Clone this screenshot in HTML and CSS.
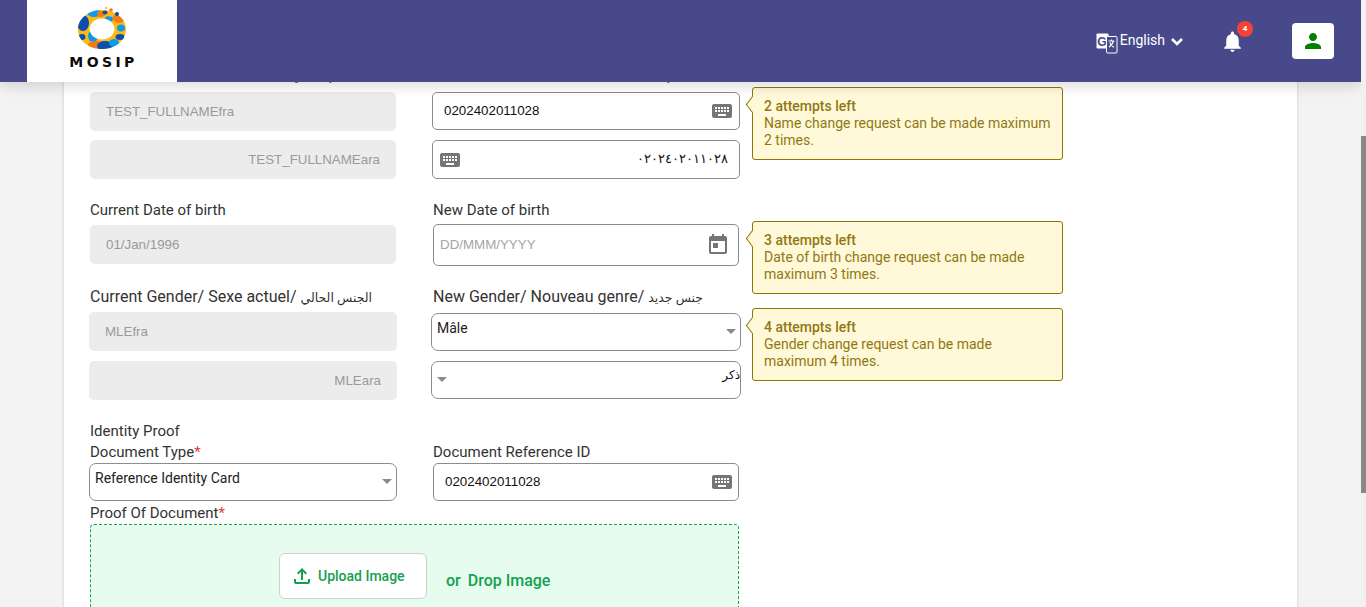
FILE: index.html
```html
<!DOCTYPE html>
<html lang="en">
<head>
<meta charset="utf-8">
<title>Update demographic data</title>
<link rel="stylesheet" href="styles.css">
</head>
<body>
<div class="page">
  <div class="view">
    <header class="header">
      <div class="logo">
        <svg class="logo-mark" viewBox="0 0 60 46" width="60" height="46" aria-hidden="true">
          <defs><clipPath id="ring"><path clip-rule="evenodd" d="M30 6c13.300 0 24 8.500 24 19.500S43.300 45 30 45 6 36.500 6 25.500 16.700 6 30 6zm0 8.500c-7 0-12.500 4.800-12.500 10.500S23 35.500 30 35.500 42.500 30.700 42.500 25 37 14.500 30 14.500z"/></clipPath></defs>
          <g clip-path="url(#ring)">
            <rect width="60" height="46" fill="#fdb913"/>
            <ellipse cx="11" cy="19" rx="6" ry="8" fill="#0a4fb0"/>
            <ellipse cx="22" cy="9" rx="7" ry="4" fill="#0a9bf0"/>
            <ellipse cx="29" cy="10" rx="4" ry="3" fill="#f57c14"/>
            <ellipse cx="47" cy="14" rx="6" ry="5" fill="#f57c14"/>
            <ellipse cx="49" cy="24" rx="4" ry="3.500" fill="#0a9bf0"/>
            <ellipse cx="48" cy="33" rx="4.500" ry="3" fill="#0a4fb0"/>
            <ellipse cx="21" cy="32" rx="5" ry="6" fill="#0a9bf0"/>
            <ellipse cx="24" cy="41" rx="8" ry="4" fill="#f57c14"/>
            <ellipse cx="33" cy="42" rx="8" ry="5" fill="#0a4fb0"/>
            <ellipse cx="42" cy="39" rx="5" ry="4" fill="#0a9bf0"/>
            <ellipse cx="10" cy="33" rx="3.500" ry="3" fill="#0a4fb0"/>
            <ellipse cx="37" cy="15" rx="4" ry="3" fill="#0a9bf0"/>
          </g>
          <ellipse cx="33" cy="8.500" rx="2.500" ry="2" fill="#0a4fb0"/>
          <circle cx="45" cy="10" r="2" fill="#0a4fb0"/>
          <circle cx="39" cy="6" r="1.800" fill="#f57c14"/>
          <circle cx="38" cy="11" r="1.800" fill="#fdb913"/>
          <circle cx="34" cy="4" r="1.100" fill="#fdb913"/>
        </svg>
        <span class="logo-text">MOSIP</span>
      </div>
      <div class="header-right">
        <div class="lang">
          <svg class="lang-icon" viewBox="0 0 22 21" width="22" height="21" aria-hidden="true">
            <rect x="0.500" y="0.500" width="12" height="15" rx="1" fill="#fff"/>
            <text x="6" y="12.500" class="lang-g">G</text>
            <rect x="10.500" y="3.500" width="10.500" height="16.500" rx="1" fill="#47498a" stroke="#fff"/>
            <path d="M12.500 8h6M15.500 6.500V8M17.500 8c-.8 3-2.700 5-4.500 6M13.800 9.500c.8 2 2.500 3.800 4.200 4.800" fill="none" stroke="#fff" stroke-width="1.200"/>
          </svg>
          <span>English</span>
          <svg class="chev" viewBox="0 0 14 9" width="14" height="9" aria-hidden="true"><path d="M2 2l5 5 5-5" fill="none" stroke="#fff" stroke-width="2.600"/></svg>
        </div>
        <div class="bell">
          <svg viewBox="0 0 24 24" width="25" height="25" aria-hidden="true"><path fill="#fff" d="M12 22c1.100 0 2-.9 2-2h-4c0 1.100.89 2 2 2zm6-6v-5c0-3.070-1.640-5.640-4.500-6.320V4c0-.83-.67-1.500-1.500-1.500s-1.500.67-1.500 1.500v.68C7.630 5.360 6 7.920 6 11v5l-2 2v1h16v-1l-2-2z"/></svg>
          <span class="badge">4</span>
        </div>
        <div class="user">
          <svg viewBox="0 0 24 24" width="24" height="24" aria-hidden="true"><path fill="#008000" d="M12 12c2.210 0 4-1.790 4-4s-1.790-4-4-4-4 1.790-4 4 1.790 4 4 4zm0 2c-2.670 0-8 1.340-8 4v2h16v-2c0-2.660-5.330-4-8-4z"/></svg>
        </div>
      </div>
    </header>

    <main class="card">
      <section class="row row-name">
        <div class="col">
          <div class="label label-top label-mixed">Current Name/ Nom actuel/ <span class="ar">الاسم الحالي</span></div>
          <div class="field readonly">TEST_FULLNAMEfra</div>
          <div class="field readonly rtl stack">TEST_FULLNAMEara</div>
        </div>
        <div class="col wide">
          <div class="label label-top label-mixed indent">New Name/ Nouveau nom/ <span class="ar">الاسم الجديد</span></div>
          <div class="field entry entry-short">
            <span class="value">0202402011028</span>
            <svg class="kb" viewBox="0 0 24 24" width="24" height="24" aria-hidden="true"><path d="M20 5H4c-1.100 0-1.990.9-1.990 2L2 17c0 1.100.9 2 2 2h16c1.100 0 2-.9 2-2V7c0-1.100-.9-2-2-2zm-9 3h2v2h-2V8zm0 3h2v2h-2v-2zM8 8h2v2H8V8zm0 3h2v2H8v-2zm-1 2H5v-2h2v2zm0-3H5V8h2v2zm9 7H8v-2h8v2zm0-4h-2v-2h2v2zm0-3h-2V8h2v2zm3 3h-2v-2h2v2zm0-3h-2V8h2v2z"/></svg>
          </div>
          <div class="field entry entry-rtl">
            <svg class="kb" viewBox="0 0 24 24" width="24" height="24" aria-hidden="true"><path d="M20 5H4c-1.100 0-1.990.9-1.990 2L2 17c0 1.100.9 2 2 2h16c1.100 0 2-.9 2-2V7c0-1.100-.9-2-2-2zm-9 3h2v2h-2V8zm0 3h2v2h-2v-2zM8 8h2v2H8V8zm0 3h2v2H8v-2zm-1 2H5v-2h2v2zm0-3H5V8h2v2zm9 7H8v-2h8v2zm0-4h-2v-2h2v2zm0-3h-2V8h2v2zm3 3h-2v-2h2v2zm0-3h-2V8h2v2z"/></svg>
            <span class="value arabic-digits">٠٢٠٢٤٠٢٠١١٠٢٨</span>
          </div>
        </div>
        <aside class="tip tip-name">
          <strong>2 attempts left</strong>
          <span>Name change request can be made maximum 2 times.</span>
        </aside>
      </section>

      <section class="row row-date">
        <div class="col">
          <div class="label">Current Date of birth</div>
          <div class="field readonly">01/Jan/1996</div>
        </div>
        <div class="col">
          <div class="label tight">New Date of birth</div>
          <div class="field date">
            <span class="placeholder">DD/MMM/YYYY</span>
            <svg viewBox="0 0 24 24" width="24" height="24" aria-hidden="true"><path fill="#757575" d="M19 3h-1V1h-2v2H8V1H6v2H5c-1.110 0-1.990.9-1.990 2L3 19c0 1.100.89 2 2 2h14c1.100 0 2-.9 2-2V5c0-1.100-.9-2-2-2zm0 16H5V8h14v11zM7 10h5v5H7z"/></svg>
          </div>
        </div>
        <aside class="tip tip-date">
          <strong>3 attempts left</strong>
          <span>Date of birth change request can be made maximum 3 times.</span>
        </aside>
      </section>

      <section class="row row-gender">
        <div class="col col-gender">
          <div class="label label-mixed label-gender">Current Gender/ Sexe actuel/ <span class="ar">الجنس الحالي</span></div>
          <div class="field readonly gender-f">MLEfra</div>
          <div class="field readonly rtl gender-s">MLEara</div>
        </div>
        <div class="col col-newgender">
          <div class="label label-mixed label-newgender">New Gender/ Nouveau genre/ <span class="ar">جنس جديد</span></div>
          <div class="field select">Mâle<i class="caret"></i></div>
          <div class="field select select-rtl"><i class="caret"></i><span class="clip">ذكر</span></div>
        </div>
        <aside class="tip tip-gender">
          <strong>4 attempts left</strong>
          <span>Gender change request can be made maximum 4 times.</span>
        </aside>
      </section>

      <div class="label section-title">Identity Proof</div>
      <section class="row row-doc">
        <div class="col col-doc">
          <div class="label label-doc">Document Type<em>*</em></div>
          <div class="field select doc-select">Reference Identity Card<i class="caret"></i></div>
        </div>
        <div class="col">
          <div class="label label-ref">Document Reference ID</div>
          <div class="field entry entry-short doc-ref">
            <span class="value">0202402011028</span>
            <svg class="kb" viewBox="0 0 24 24" width="24" height="24" aria-hidden="true"><path d="M20 5H4c-1.100 0-1.990.9-1.990 2L2 17c0 1.100.9 2 2 2h16c1.100 0 2-.9 2-2V7c0-1.100-.9-2-2-2zm-9 3h2v2h-2V8zm0 3h2v2h-2v-2zM8 8h2v2H8V8zm0 3h2v2H8v-2zm-1 2H5v-2h2v2zm0-3H5V8h2v2zm9 7H8v-2h8v2zm0-4h-2v-2h2v2zm0-3h-2V8h2v2zm3 3h-2v-2h2v2zm0-3h-2V8h2v2z"/></svg>
          </div>
        </div>
      </section>

      <div class="label proof-label">Proof Of Document<em>*</em></div>
      <div class="dropzone">
        <button class="upload" type="button">
          <svg viewBox="0 0 24 24" width="24" height="24" aria-hidden="true"><path fill="#14a04f" d="M18 15v3H6v-3H4v3c0 1.100.9 2 2 2h12c1.100 0 2-.9 2-2v-3h-2zM7 9l1.410 1.410L11 7.830V16h2V7.830l2.590 2.580L17 9l-5-5-5 5z"/></svg>
          <span>Upload Image</span>
        </button>
        <div class="drop-text"><span>or</span><span>Drop Image</span></div>
      </div>
    </main>
  </div>
  <div class="scrollbar"><div class="thumb"></div></div>
</div>
</body>
</html>
```

FILE: styles.css
```css
* { box-sizing: border-box; }
html, body { margin: 0; height: 100%; overflow: hidden; }
body {
  font-family: Roboto, "DejaVu Sans", sans-serif;
  font-size: 14px;
  color: #333;
  background: #f3f3f3;
}
.page { display: flex; height: 607px; overflow: hidden; }
.view { position: relative; flex: 1; min-width: 0; overflow: hidden; }

/* header */
.header {
  position: absolute;
  top: 0; left: 0; right: 0;
  z-index: 5;
  height: 82px;
  padding: 0 27px;
  display: flex;
  justify-content: space-between;
  background: #47498a;
  box-shadow: 0 3px 14px rgba(0,0,0,.16);
}
.logo {
  width: 150px;
  background: #fff;
  display: flex;
  flex-direction: column;
  align-items: center;
  padding-top: 4px;
}
.logo-mark { display: block; }
.logo-text {
  font-family: "DejaVu Sans", sans-serif;
  font-weight: 700;
  font-size: 14px;
  line-height: 14px;
  letter-spacing: 3.4px;
  margin-right: -3px;
  color: #0c0c0c;
  margin-top: 5px;
}
.header-right { display: flex; align-items: center; }
.lang {
  display: flex;
  align-items: center;
  color: #fff;
  font-size: 14px;
  line-height: 17px;
  margin-right: 36px;
}
.lang span { margin-left: 2px; margin-top: -2px; }
.lang-icon { display: block; margin-top: 4px; }
.lang-g { font: 700 12px "Liberation Sans", sans-serif; fill: #47498a; text-anchor: middle; }
.chev { margin-left: 5px; }
.bell { position: relative; width: 25px; height: 25px; margin-right: 47px; margin-top: 1px; }
.bell svg { display: block; }
.badge {
  position: absolute;
  top: -8px; left: 17px;
  width: 16px; height: 16px;
  border-radius: 50%;
  background: #f44336;
  color: #fff;
  font-size: 8px;
  font-weight: 700;
  line-height: 16px;
  text-align: center;
}
.user {
  width: 42px; height: 36px;
  border-radius: 4px;
  background: #fff;
  display: flex;
  align-items: center;
  justify-content: center;
}

/* card */
.card {
  margin: 0 64px;
  min-height: 607px;
  padding: 66px 26px 0;
  background: #fff;
  box-shadow: 0 0 3px rgba(0,0,0,.18);
  overflow: hidden;
}
.row { display: flex; align-items: flex-start; }
.col { width: 306px; flex: none; }
.col + .col { margin-left: 37px; }
.col.wide { width: 308px; margin-left: 36px; }
.row-date { margin-top: 23px; height: 64px; }
.row-gender { margin-top: 22px; }

.label { height: 17px; font-size: 15px; line-height: 17px; color: #333; white-space: nowrap; margin-bottom: 6px; }
.label-mixed { font-size: 16px; }
.label-mixed .ar { font-size: 12.5px; }
.label-top { margin-bottom: 9px; }
.label em { color: #e53935; font-style: normal; }
.indent { margin-left: 1px; }
.tight { margin-bottom: 5px; }

.field {
  height: 39px;
  border-radius: 5px;
  display: flex;
  align-items: center;
  flex: none;
}
.stack { margin-top: 9px; }
.readonly {
  background: #ececec;
  color: #9a9a9a;
  padding: 0 16px;
  font-family: "Liberation Sans", Arial, sans-serif;
  font-size: 13.333px;
}
.rtl { justify-content: flex-end; }
.entry {
  border: 1px solid #8c8c8c;
  background: #fff;
  justify-content: space-between;
  padding: 0 5px 0 11px;
  font-family: "Liberation Sans", Arial, sans-serif;
  font-size: 13.333px;
  color: #111;
}
.value { margin-top: -2px; }
.entry-short { height: 38px; }
.entry-rtl { margin-top: 10px; padding: 0 11px 0 5px; }
.kb { fill: #757575; display: block; }
.arabic-digits { font-size: 13px; }
.date {
  height: 42px;
  border: 1px solid #8c8c8c;
  background: #fff;
  justify-content: space-between;
  padding: 0 8px 0 6px;
}
.placeholder { color: #a5a5a5; font-family: "Liberation Sans", Arial, sans-serif; font-size: 13.333px; margin-top: -2px; }

/* select */
.select {
  position: relative;
  height: 38px;
  border: 1px solid #8c8c8c;
  background: #fff;
  color: #222;
  align-items: flex-start;
  padding: 6px 5px;
  line-height: 17px;
  border-radius: 7px;
}
.caret {
  position: absolute;
  right: 4px; top: 15px;
  border-left: 5px solid transparent;
  border-right: 5px solid transparent;
  border-top: 5px solid #8a8a8a;
}
.select-rtl { margin-top: 10px; justify-content: flex-end; padding-right: 0; }
.select-rtl .caret { right: auto; left: 5px; }
.clip { white-space: nowrap; color: #111; font-size: 12px; margin-top: -1px; }

/* gender row offsets */
.col-gender { width: 308px; margin-left: -1px; }
.label-gender { margin-left: 1px; margin-bottom: 7px; }
.gender-s { margin-top: 10px; }
.gender-f { padding-left: 16px; }
.col-gender + .col { margin-left: 34px; }
.col-newgender { width: 310px; }
.label-newgender { margin-left: 2px; margin-bottom: 8px; }
.col-newgender .select-rtl { margin-top: 10px; }

/* doc row */
.section-title { margin: 23px 0 4px; }
.section-title + .row .label { margin-bottom: 2px; }
.col-doc { width: 308px; margin-left: -1px; }
.label-doc { margin-left: 1px; }
.col-doc + .col { margin-left: 36px; }
.doc-ref { padding-right: 4px; }
.doc-select { padding-top: 6px; }
.proof-label { margin: 4px 0 2px; }

/* tips */
.tip {
  position: relative;
  width: 311px;
  height: 73px;
  flex: none;
  margin-left: 12px;
  padding: 10px 11px;
  background: #fff8d9;
  border: 1px solid #8f7600;
  border-radius: 3px;
  color: #8f7811;
  line-height: 17px;
}
.tip strong { display: block; font-weight: 500; }
.tip span { display: block; }
.tip::before {
  content: "";
  position: absolute;
  left: -6px; top: 11px;
  width: 10px; height: 10px;
  background: #fff8d9;
  border-left: 1px solid #8f7600;
  border-bottom: 1px solid #8f7600;
  transform: rotate(45deg) skew(8deg, 8deg);
}
.tip-name { margin-top: 21px; }
.tip-date { margin-top: 19px; margin-left: 13px; }
.tip-gender { margin-top: 20px; margin-left: 11px; }

/* dropzone */
.dropzone {
  width: 649px;
  height: 160px;
  border: 1px dashed #1aa251;
  border-radius: 4px;
  background: #e5fcef;
  display: flex;
  align-items: flex-start;
  padding: 28px 0 0 188px;
}
.upload {
  width: 148px;
  height: 46px;
  flex: none;
  background: #fff;
  border: 1px solid #cfcfcf;
  border-radius: 6px;
  display: flex;
  align-items: center;
  gap: 4px;
  padding: 0 0 0 10px;
  color: #14a04f;
  font: 500 14px Roboto, sans-serif;
}
.upload span { margin-top: -1px; }
.drop-text {
  display: flex;
  gap: 7px;
  margin: 18px 0 0 19px;
  color: #14a04f;
  font-size: 16px;
  font-weight: 500;
  line-height: 20px;
}

/* scrollbar */
.scrollbar { width: 5px; flex: none; background: #f1f1f1; }
.thumb { width: 5px; height: 357px; margin-top: 136px; background: #888; }
```
